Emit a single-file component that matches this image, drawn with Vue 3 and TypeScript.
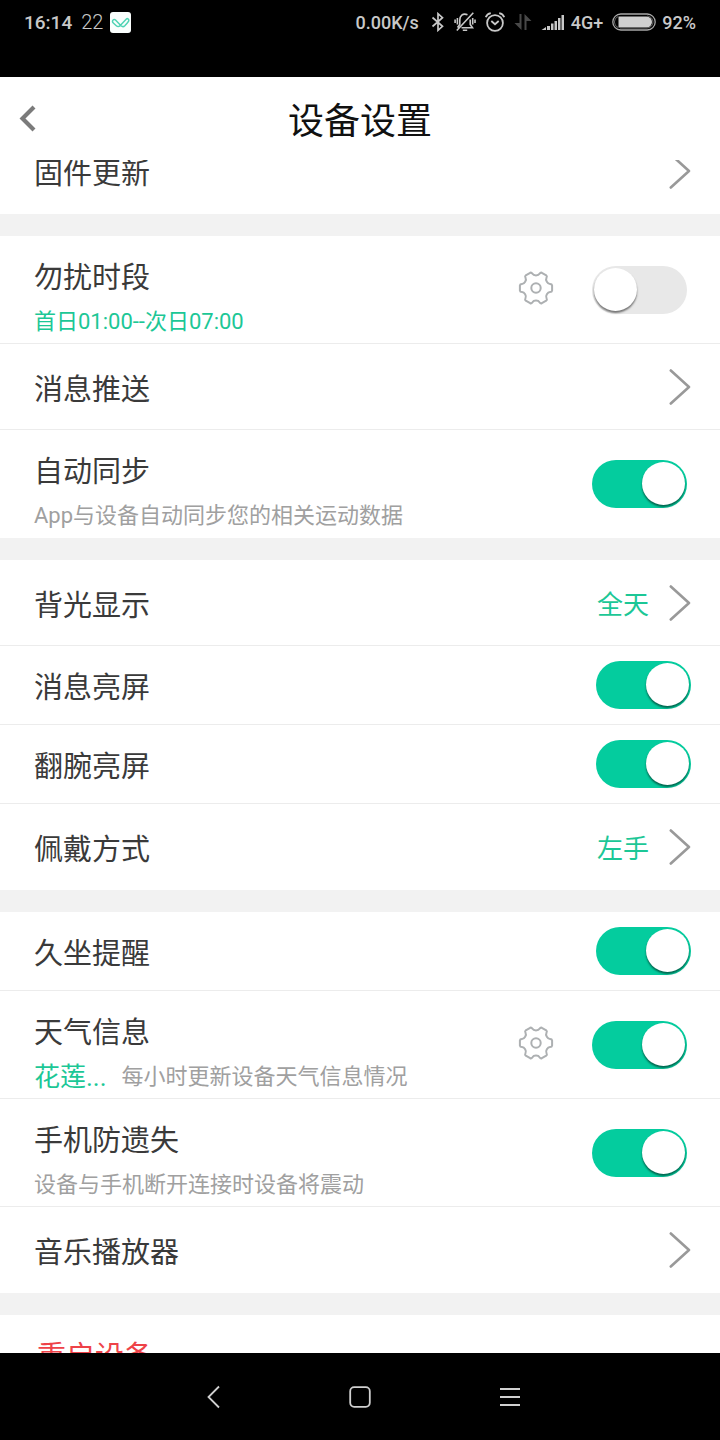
<script setup lang="ts">
import { onMounted, reactive, ref } from 'vue'

type Kind = 'link' | 'switch' | 'detail' | 'danger'

interface Row {
  id: string
  title: string
  kind: Kind
  value?: string
  city?: string
  note?: string
  accentNote?: boolean
  gear?: boolean
  on?: boolean
}

const groups = reactive<Row[][]>([
  [{ id: 'firmware', title: '固件更新', kind: 'link' }],
  [
    { id: 'dnd', title: '勿扰时段', kind: 'detail', note: '首日01:00--次日07:00', accentNote: true, gear: true, on: false },
    { id: 'push', title: '消息推送', kind: 'link' },
    { id: 'sync', title: '自动同步', kind: 'detail', note: 'App与设备自动同步您的相关运动数据', on: true },
  ],
  [
    { id: 'backlight', title: '背光显示', kind: 'link', value: '全天' },
    { id: 'message-light', title: '消息亮屏', kind: 'switch', on: true },
    { id: 'wrist-light', title: '翻腕亮屏', kind: 'switch', on: true },
    { id: 'wearing', title: '佩戴方式', kind: 'link', value: '左手' },
  ],
  [
    { id: 'sedentary', title: '久坐提醒', kind: 'switch', on: true },
    { id: 'weather', title: '天气信息', kind: 'detail', city: '花莲...', note: '每小时更新设备天气信息情况', gear: true, on: true },
    { id: 'anti-lost', title: '手机防遗失', kind: 'detail', note: '设备与手机断开连接时设备将震动', on: true },
    { id: 'music', title: '音乐播放器', kind: 'link' },
  ],
  [{ id: 'restart', title: '重启设备', kind: 'danger' }],
])

const list = ref<HTMLElement | null>(null)
onMounted(() => {
  if (list.value) list.value.scrollTop = 32
})

function polar(angle: number, radius: number): string {
  const a = (angle * Math.PI) / 180
  return `${(18 + radius * Math.cos(a)).toFixed(2)} ${(18 + radius * Math.sin(a)).toFixed(2)}`
}

function gearOutline(): string {
  let d = `M${polar(-9, 16.3)}`
  for (let t = 0; t < 360; t += 60) {
    d += `L${polar(t + 9, 16.3)}Q${polar(t + 14, 16.4)} ${polar(t + 16, 14.6)}`
    d += `C${polar(t + 19, 12.2)} ${polar(t + 41, 12.2)} ${polar(t + 44, 14.6)}`
    d += `Q${polar(t + 46, 16.4)} ${polar(t + 51, 16.3)}`
  }
  return d + 'Z'
}
const gearPath = gearOutline()
</script>

<template>
  <div class="phone">
    <div class="status">
      <div class="status-side">
        <span class="clock">16:14</span>
        <span class="count">22</span>
        <svg class="app-icon" width="21" height="21" viewBox="0 0 21 21" fill="none" aria-hidden="true">
          <rect width="21" height="21" rx="3" fill="#fafefd" />
          <path d="M3.6 7.6C2.2 8.4 2.1 9.9 3.3 11L6.300 13.700C7.600 14.900 9 14.800 10 13.700L16.400 7C17.400 6 19 7.200 18.800 8.600C18.700 9.500 17.900 10.200 17.300 10.900L14.800 13.700C13.500 15 12.300 14.900 11 13.700L5.500 8C4.900 7.400 4.200 7.300 3.600 7.600Z" stroke="#4fd3b4" stroke-width="1.500" />
        </svg>
      </div>
      <div class="status-side">
        <span class="speed">0.00K/s</span>
        <svg class="bt" width="14" height="20" viewBox="0 0 14 20" fill="none" stroke="#c8c8c8" stroke-width="1.700" aria-hidden="true">
          <path d="M1.500 5.500L11.500 14.300L7 18.300V1.700L11.500 5.700L1.500 14.500" />
        </svg>
        <svg class="bell" width="22" height="20" viewBox="0 0 22 20" fill="none" stroke="#c8c8c8" stroke-width="1.600" aria-hidden="true">
          <path d="M13.500 2.700C8.500 0.800 5.800 4 5.800 8V12.500L3.500 15.500M7.500 15.800H18.500L16.200 12.500V7.500M8.800 18.300H13.200M19.300 0.800L2.800 18.500M3.400 6V12.500M1.100 7.500V11M18.700 6V12.500M21 7.500V11" />
        </svg>
        <svg class="alarm" width="20" height="20" viewBox="0 0 20 20" fill="none" stroke="#c8c8c8" stroke-width="1.800" aria-hidden="true">
          <circle cx="10" cy="11" r="7.900" />
          <path d="M6.300 9L10 12.200L13.700 9M0.800 5.300C1.500 3 3.200 1.600 5.800 1.100M19.200 5.300C18.500 3 16.800 1.600 14.200 1.100" />
        </svg>
        <svg class="data" width="18" height="18" viewBox="0 0 18 18" fill="#484848" aria-hidden="true">
          <path d="M5.500 1H7.500V17L0.500 10H5.500ZM10.500 17H12.500V8H17.500L10.500 1Z" />
        </svg>
        <svg class="signal" width="24" height="16" viewBox="0 0 24 16" fill="#c8c8c8" aria-hidden="true">
          <path d="M0.500 16L5 13V16ZM6 12H9V16H6ZM10 9.500H12.500V16H10ZM13.500 7H16V16H13.500ZM17 4H19.500V16H17ZM20.500 1H23V16H20.500Z" />
        </svg>
        <span class="net">4G+</span>
        <svg class="battery" width="44" height="18" viewBox="0 0 44 18" fill="none" aria-hidden="true">
          <rect x="0.800" y="1" width="42.400" height="16" rx="8" stroke="#a8a8a8" stroke-width="1.300" />
          <path d="M6.500 3.500H34.500A5.500 5.500 0 0 1 34.500 14.500H6.500Z" fill="#cfcfcf" />
          <path d="M6 3.500A6 6 0 0 0 6 14.500M35 3A6 6 0 0 1 35 15H8" stroke="#666" stroke-width="1" />
        </svg>
        <span class="percent">92%</span>
      </div>
    </div>

    <header class="header">
      <button class="back" type="button" aria-label="返回">
        <svg width="18" height="28" viewBox="0 0 18 28" fill="none" stroke="#7b7b7b" stroke-width="4.200">
          <path d="M15 2L3.500 13.500L15 25" />
        </svg>
      </button>
      <h1>设备设置</h1>
    </header>

    <main ref="list" class="list">
      <section v-for="(rows, g) in groups" :key="g" class="group">
        <template v-for="row in rows" :key="row.id">
          <button v-if="row.kind === 'link'" class="row link" type="button">
            <span class="title">{{ row.title }}</span>
            <span v-if="row.value" class="value">{{ row.value }}</span>
            <svg class="chevron" width="22" height="38" viewBox="0 0 22 38" fill="none" stroke="#999" stroke-width="2.600" stroke-linecap="round" stroke-linejoin="round">
              <path d="M1.800 2.500L20 19L1.800 35.500" />
            </svg>
          </button>

          <button v-else-if="row.kind === 'danger'" class="row danger" type="button">
            <span class="title">{{ row.title }}</span>
          </button>

          <div v-else class="row" :class="row.kind">
            <div class="texts">
              <label class="title" :for="row.id">{{ row.title }}</label>
              <p v-if="row.note" class="note" :class="{ accent: row.accentNote }">
                <span v-if="row.city" class="city">{{ row.city }}</span>
                <span>{{ row.note }}</span>
              </p>
            </div>
            <button v-if="row.gear" class="gear" type="button" :aria-label="row.title">
              <svg width="36" height="36" viewBox="0 0 36 36" fill="none" stroke="#adb0b2" stroke-width="2" stroke-linejoin="round">
                <path :d="gearPath" />
                <circle cx="18" cy="18" r="4.700" />
              </svg>
            </button>
            <input :id="row.id" v-model="row.on" class="switch-input" type="checkbox" role="switch" />
          </div>
        </template>
      </section>
    </main>

    <nav class="nav">
      <button type="button" aria-label="返回">
        <svg width="24" height="24" viewBox="0 0 24 24" fill="none" stroke="#d0d0d0" stroke-width="1.800">
          <path d="M21 1.500L10.500 12L21 22.500" />
        </svg>
      </button>
      <button type="button" aria-label="主屏幕">
        <svg width="24" height="24" viewBox="0 0 24 24" fill="none" stroke="#d0d0d0" stroke-width="1.800">
          <rect x="2.200" y="2.200" width="19.600" height="19.600" rx="4" />
        </svg>
      </button>
      <button type="button" aria-label="菜单">
        <svg width="24" height="24" viewBox="0 0 24 24" fill="none" stroke="#d0d0d0" stroke-width="1.800">
          <path d="M2 4H22M2 12H22M2 20H22" />
        </svg>
      </button>
    </nav>
  </div>
</template>

<style>
body {
  margin: 0;
  background: #000;
}
</style>

<style scoped>
.phone {
  display: flex;
  flex-direction: column;
  height: 100vh;
  background: #000;
  color: #3a3a3a;
  font-family: Roboto, "Noto Sans CJK SC", sans-serif;
}

button {
  border: 0;
  padding: 0;
  background: none;
  font: inherit;
  color: inherit;
  cursor: pointer;
}

svg {
  display: block;
  flex: none;
}

.status {
  display: flex;
  justify-content: space-between;
  flex: none;
  height: 77px;
  padding: 0 24px;
  color: #c8c8c8;
}

.status-side {
  display: flex;
  align-items: center;
  height: 44px;
  font-size: 18px;
  font-weight: 500;
  white-space: nowrap;
}

.clock {
  font-size: 19px;
}

.count {
  margin: 0 7px 0 9px;
  font-size: 20px;
  font-weight: 300;
}

.bt {
  margin-left: 12px;
}

.bell,
.alarm,
.data,
.signal {
  margin-left: 9px;
}

.net {
  margin-left: 6px;
}

.battery {
  margin: 0 6px 0 9px;
}

.header {
  display: grid;
  grid-template-columns: 60px 1fr 60px;
  align-items: center;
  flex: none;
  height: 83px;
  background: #fff;
}

.back {
  justify-self: start;
  padding-left: 19px;
}

.header h1 {
  margin: 0;
  padding-top: 6px;
  color: #111;
  font-size: 36px;
  font-weight: 400;
  line-height: 54px;
  text-align: center;
}

.list {
  flex: 1;
  min-height: 0;
  overflow-y: auto;
  background: #f2f2f2;
  scrollbar-width: none;
}

.group {
  background: #fff;
}

.group + .group {
  margin-top: 22px;
}

.row {
  display: flex;
  align-items: center;
  box-sizing: border-box;
  width: 100%;
  padding: 0 29px 0 34px;
  border-bottom: 1px solid #ececec;
  text-align: left;
}

.row:last-child {
  border-bottom-color: transparent;
}

.link {
  height: 86px;
}

.switch {
  height: 79px;
}

.detail {
  height: 108px;
  padding-right: 33px;
}

.title {
  display: block;
  flex: 1;
  font-size: 29px;
  line-height: 44px;
}

.link .title,
.switch .title {
  padding-top: 6px;
}

.texts {
  flex: 1;
  min-width: 0;
}

.detail .texts {
  align-self: flex-start;
  padding-top: 20px;
}

.note {
  display: flex;
  align-items: center;
  gap: 15px;
  margin: 0;
  color: #a0a0a0;
  font-size: 22px;
  line-height: 44px;
}

.accent,
.city,
.value {
  color: #1cc796;
}

.city,
.value {
  font-size: 26px;
}

.value {
  margin-right: 20px;
}

.gear {
  margin: 0 38px 4px 0;
}

.switch-input {
  display: flex;
  flex: none;
  justify-content: flex-start;
  box-sizing: border-box;
  width: 95px;
  height: 48px;
  margin: 0;
  padding: 2px;
  border-radius: 24px;
  background: #e8e8e8;
  appearance: none;
  cursor: pointer;
}

.switch-input::before {
  content: "";
  width: 43px;
  height: 43px;
  border-radius: 50%;
  background: #fff;
  box-shadow: 0 2px 2px rgba(0, 0, 0, 0.5);
}

.switch-input:checked {
  justify-content: flex-end;
  background: #04cc9e;
}

.danger {
  height: 84px;
  padding-left: 37px;
  color: #ee4248;
}

.nav {
  display: grid;
  grid-template-columns: repeat(3, 150px);
  justify-content: center;
  flex: none;
  height: 87px;
}

.nav button {
  display: grid;
  place-items: center;
}
</style>
